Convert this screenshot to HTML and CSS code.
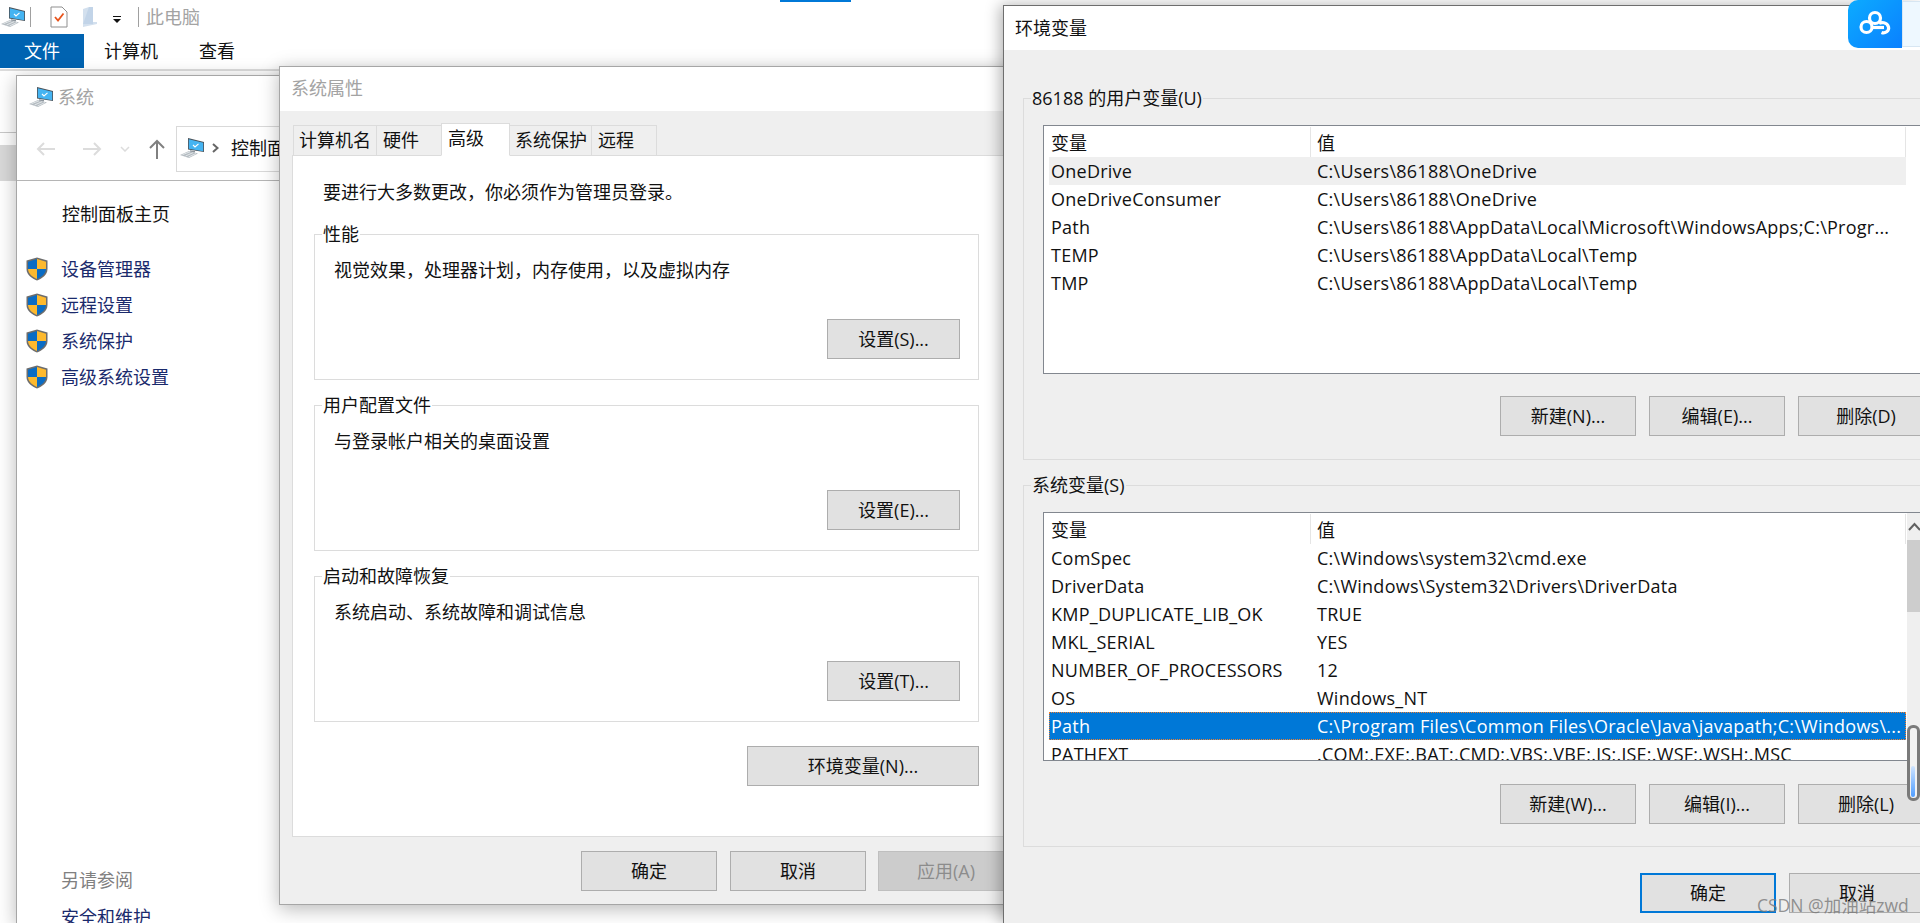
FILE: index.html
```html
<!DOCTYPE html>
<html lang="zh-CN">
<head>
<meta charset="utf-8">
<title>环境变量</title>
<link rel="stylesheet" href="styles.css">
</head>
<body>
<svg class="defs" width="0" height="0">
  <defs>
    <symbol id="pc" viewBox="0 0 24 20">
      <path d="M8 0 24 4V14L8 11.500Z" fill="#4a5157"/>
      <path d="M8.800 1.200 23.200 4.800V13.200L8.800 10.800Z" fill="#45b4f2"/>
      <path d="M13 7 15 9 18.500 5.800" fill="none" stroke="#fff" stroke-width="1.100"/>
      <path d="M10 12.200 15 13 15 14.500 10 13.700Z" fill="#8d969d"/>
      <path d="M0 17 9 13 18 15.500 9 20Z" fill="#b4bbc1"/>
      <path d="M2.500 16.700 10 13.800M5.500 18 13 14.700M8.500 19 16 15.500" stroke="#eef1f3" stroke-width=".8" fill="none"/>
    </symbol>
    <symbol id="shield" viewBox="0 0 22 24">
      <path d="M11 .5 21.500 3.600V12C21.500 18 16 21.500 11 23.500 6 21.500.5 18 .5 12V3.600Z" fill="#6d6d6d"/>
      <path d="M11 2 2 4.700V12H11Z" fill="#0a6cc4"/>
      <path d="M11 2 20 4.700V12H11Z" fill="#fdb92e"/>
      <path d="M2 12C2.400 17 6.500 20 11 22V12Z" fill="#fdb92e"/>
      <path d="M20 12C19.600 17 15.500 20 11 22V12Z" fill="#0a6cc4"/>
    </symbol>
  </defs>
</svg>

<div class="explorer">
  <div class="qat">
    <svg class="ico-pc"><use href="#pc"/></svg>
    <span class="qat-sep"></span>
    <svg class="ico-note" viewBox="0 0 18 22"><path d="M1 1H12L17 6V21H1Z" fill="#fff" stroke="#8f8f8f"/><path d="M5 11 8 14.500 13.500 7.500" fill="none" stroke="#e8541c" stroke-width="1.800"/></svg>
    <svg class="ico-folder" viewBox="0 0 14 20"><path d="M0 2 6 0H10V15H14V17L0 20Z" fill="#d3e0ee"/><path d="M6 0H10V17H0Z" fill="#c2d4e8"/></svg>
    <svg class="ico-drop" viewBox="0 0 8 7"><path d="M0 0H8V1H0ZM0 3H8L4 7Z" fill="#111"/></svg>
    <span class="qat-sep second"></span>
    <span class="qat-title">此电脑</span>
  </div>
  <div class="ribbon">
    <span class="rtab file">文件</span>
    <span class="rtab comp">计算机</span>
    <span class="rtab view">查看</span>
  </div>
  <div class="side-strip"></div>
</div>
<div class="top-blue"></div>

<section class="win sys">
  <header class="sys-title">
    <svg class="ico-pc"><use href="#pc"/></svg>
    <span>系统</span>
  </header>
  <div class="sys-nav">
    <svg class="nav-arrow back" viewBox="0 0 20 16"><path d="M19 8H2M8 2 2 8 8 14" fill="none" stroke="#dcdcdc" stroke-width="2"/></svg>
    <svg class="nav-arrow fwd" viewBox="0 0 20 16"><path d="M1 8H18M12 2 18 8 12 14" fill="none" stroke="#dcdcdc" stroke-width="2"/></svg>
    <svg class="nav-chev" viewBox="0 0 10 6"><path d="M1 1 5 5 9 1" fill="none" stroke="#dcdcdc" stroke-width="1.500"/></svg>
    <svg class="nav-up" viewBox="0 0 16 20"><path d="M8 20V2M1 9 8 2 15 9" fill="none" stroke="#808080" stroke-width="2"/></svg>
    <div class="addr">
      <svg class="ico-pc"><use href="#pc"/></svg>
      <svg class="addr-chev" viewBox="0 0 7 10"><path d="M1 1 5.500 5 1 9" fill="none" stroke="#666" stroke-width="2"/></svg>
      <span>控制面板</span>
    </div>
  </div>
  <div class="sys-side">
    <p class="home">控制面板主页</p>
    <ul class="tasks">
      <li><svg class="ico-shield"><use href="#shield"/></svg>设备管理器</li>
      <li><svg class="ico-shield"><use href="#shield"/></svg>远程设置</li>
      <li><svg class="ico-shield"><use href="#shield"/></svg>系统保护</li>
      <li><svg class="ico-shield"><use href="#shield"/></svg>高级系统设置</li>
    </ul>
    <p class="see">另请参阅</p>
    <p class="see-link">安全和维护</p>
  </div>
</section>

<section class="win props">
  <header class="title props-title">系统属性</header>
  <div class="props-body">
    <div class="tabs">
      <span class="tab t1">计算机名</span>
      <span class="tab t2">硬件</span>
      <span class="tab t3 active">高级</span>
      <span class="tab t4">系统保护</span>
      <span class="tab t5">远程</span>
    </div>
    <div class="panel">
      <p class="intro">要进行大多数更改，你必须作为管理员登录。</p>
      <div class="group pgroup first">
        <div class="legend white">性能</div>
        <p class="desc">视觉效果，处理器计划，内存使用，以及虚拟内存</p>
        <button class="btn pbtn">设置(S)...</button>
      </div>
      <div class="group pgroup">
        <div class="legend white">用户配置文件</div>
        <p class="desc">与登录帐户相关的桌面设置</p>
        <button class="btn pbtn">设置(E)...</button>
      </div>
      <div class="group pgroup third">
        <div class="legend white">启动和故障恢复</div>
        <p class="desc">系统启动、系统故障和调试信息</p>
        <button class="btn pbtn">设置(T)...</button>
      </div>
      <div class="env-row"><button class="btn env-btn">环境变量(N)...</button></div>
    </div>
    <div class="props-foot">
      <button class="btn foot">确定</button>
      <button class="btn foot">取消</button>
      <button class="btn foot disabled">应用(A)</button>
    </div>
  </div>
</section>

<section class="win env">
  <header class="title env-title">环境变量</header>
  <div class="env-body">
    <div class="group egroup">
      <div class="legend">86188 的用户变量(U)</div>
      <div class="list">
        <div class="list-inner">
          <div class="lhead"><span class="hn">变量</span><span class="hv">值</span></div>
          <div class="row hover"><span class="n">OneDrive</span><span>C:\Users\86188\OneDrive</span></div>
          <div class="row"><span class="n">OneDriveConsumer</span><span>C:\Users\86188\OneDrive</span></div>
          <div class="row"><span class="n">Path</span><span>C:\Users\86188\AppData\Local\Microsoft\WindowsApps;C:\Progr...</span></div>
          <div class="row"><span class="n">TEMP</span><span>C:\Users\86188\AppData\Local\Temp</span></div>
          <div class="row"><span class="n">TMP</span><span>C:\Users\86188\AppData\Local\Temp</span></div>
        </div>
      </div>
      <div class="btns">
        <button class="btn ebtn">新建(N)...</button>
        <button class="btn ebtn">编辑(E)...</button>
        <button class="btn ebtn">删除(D)</button>
      </div>
    </div>
    <div class="group egroup second">
      <div class="legend">系统变量(S)</div>
      <div class="list">
        <div class="list-inner">
          <div class="lhead"><span class="hn">变量</span><span class="hv">值</span></div>
          <div class="row"><span class="n">ComSpec</span><span>C:\Windows\system32\cmd.exe</span></div>
          <div class="row"><span class="n">DriverData</span><span>C:\Windows\System32\Drivers\DriverData</span></div>
          <div class="row"><span class="n">KMP_DUPLICATE_LIB_OK</span><span>TRUE</span></div>
          <div class="row"><span class="n">MKL_SERIAL</span><span>YES</span></div>
          <div class="row"><span class="n">NUMBER_OF_PROCESSORS</span><span>12</span></div>
          <div class="row"><span class="n">OS</span><span>Windows_NT</span></div>
          <div class="row selected"><span class="n">Path</span><span>C:\Program Files\Common Files\Oracle\Java\javapath;C:\Windows\...</span></div>
          <div class="row"><span class="n">PATHEXT</span><span>.COM;.EXE;.BAT;.CMD;.VBS;.VBE;.JS;.JSE;.WSF;.WSH;.MSC</span></div>
        </div>
        <div class="scroll">
          <div class="sc-up"><svg viewBox="0 0 13 9"><path d="M1 8 6.500 2 12 8" fill="none" stroke="#606060" stroke-width="2"/></svg></div>
          <div class="sc-thumb"></div>
        </div>
      </div>
      <div class="btns low">
        <button class="btn ebtn">新建(W)...</button>
        <button class="btn ebtn">编辑(I)...</button>
        <button class="btn ebtn">删除(L)</button>
      </div>
    </div>
    <div class="env-foot">
      <button class="btn ebtn primary">确定</button>
      <button class="btn ebtn">取消</button>
    </div>
  </div>
</section>

<div class="pen"><span class="pen-fill"></span></div>

<div class="netdisk">
  <div class="nd-logo">
    <svg viewBox="0 0 54 48"><g fill="none" stroke="#fff" stroke-width="3.200"><circle cx="27" cy="18" r="5.500"/><circle cx="18.500" cy="27" r="5.500"/><path d="M31 23.500C33 22 39 22 40.500 27 41.500 31 37 34 33.500 32.500"/><path d="M24 27.500H36"/></g></svg>
  </div>
  <div class="nd-panel"></div>
</div>

<div class="watermark">CSDN @加油站zwd</div>
</body>
</html>
```

FILE: styles.css
```css
* { box-sizing: border-box; }
html, body {
  margin: 0;
  width: 1920px;
  height: 923px;
  overflow: hidden;
  background: #fff;
}
body {
  font-family: "Open Sans", "Noto Sans CJK SC", sans-serif;
  font-size: 18px;
  line-height: 24px;
  color: #111;
  position: relative;
}
p, ul { margin: 0; padding: 0; list-style: none; }
.defs { display: block; height: 0; }
button { font: inherit; color: inherit; padding: 0; }
svg { flex: none; }

/* explorer behind */
.explorer { width: 1920px; }
.qat { display: flex; align-items: center; height: 34px; padding-left: 1px; }
.qat .ico-pc { width: 24px; height: 20px; }
.qat-sep { width: 1px; height: 20px; background: #a0a0a0; margin-left: 5px; }
.qat-sep.second { margin-left: 17px; }
.ico-note { width: 18px; height: 22px; margin-left: 19px; }
.ico-folder { width: 14px; height: 20px; margin-left: 15px; }
.ico-drop { width: 8px; height: 7px; margin-left: 16px; margin-top: 4px; }
.qat-title { color: #a3a3a3; margin-left: 7px; }
.ribbon { display: flex; height: 37px; border-bottom: 2px solid #dcdcdc; }
.rtab { height: 34px; line-height: 34px; }
.rtab.file { width: 84px; background: #0063b1; color: #fff; padding-left: 24px; }
.rtab.comp { margin-left: 20px; }
.rtab.view { margin-left: 41px; }
.side-strip {
  width: 16px;
  height: 110px;
  border-top: 1px solid #c8c8c8;
  margin-top: 61px;
  background: linear-gradient(#fff 0 12px, #d9d9d9 12px 48px, #fff 48px);
}
.top-blue { position: absolute; left: 780px; top: 0; width: 71px; height: 2px; background: #0078d7; }

/* windows on the desktop */
.win { position: absolute; box-shadow: 0 4px 18px rgba(0, 0, 0, .28); overflow: hidden; }

.sys { left: 16px; top: 75px; width: 1000px; height: 848px; background: #fff; border: 1px solid #a6a6a6; border-bottom: 0; }
.sys-title { display: flex; align-items: center; height: 42px; padding: 0 0 0 12px; color: #a3a3a3; }
.sys-title .ico-pc { width: 24px; height: 20px; margin-right: 5px; }
.sys-nav { display: flex; align-items: center; height: 63px; border-bottom: 1px solid #b5b5b5; padding-left: 19px; }
.nav-arrow { width: 20px; height: 16px; }
.nav-arrow.fwd { margin-left: 26px; }
.nav-chev { width: 10px; height: 6px; margin-left: 18px; }
.nav-up { width: 16px; height: 20px; margin-left: 19px; }
.addr { display: flex; align-items: center; width: 200px; height: 46px; border: 1px solid #d9d9d9; margin-left: 11px; padding: 0 0 2px 3px; white-space: nowrap; overflow: hidden; flex: none; }
.addr .ico-pc { width: 24px; height: 20px; flex: none; }
.addr-chev { width: 7px; height: 10px; margin-left: 8px; flex: none; }
.addr span { margin-left: 12px; }
.sys-side { padding-left: 9px; }
.home { margin: 21px 0 0 36px; }
.tasks { margin-top: 25px; }
.tasks li { display: flex; align-items: center; height: 36px; color: #1a2a6c; }
.ico-shield { width: 22px; height: 24px; margin-right: 13px; flex: none; }
.see { margin: 473px 0 0 35px; color: #808080; }
.see-link { margin: 13px 0 0 35px; color: #1a2a6c; }

/* shared */
.title { display: flex; align-items: center; background: #fff; height: 44px; }
.group { border: 1px solid #dcdcdc; }
.legend { width: fit-content; margin: -14px 0 0 7px; padding: 0 1px; line-height: 26px; background: #efefef; }
.legend.white { background: #fff; }
.btn { display: block; height: 40px; background: #e1e1e1; border: 1px solid #adadad; text-align: center; }

/* system properties */
.props { left: 279px; top: 66px; width: 800px; height: 839px; background: #efefef; border: 1px solid #a6a6a6; }
.props-title { padding: 0 0 2px 11px; color: #a3a3a3; }
.props-body { padding-top: 14px; }
.tabs { display: flex; align-items: flex-end; height: 31px; margin: 0 0 -1px 13px; position: relative; z-index: 1; }
.tab { height: 31px; background: #efefef; border: 1px solid #dcdcdc; border-bottom: 1px solid #dcdcdc; border-left-width: 0; padding-left: 6px; line-height: 28px; white-space: nowrap; }
.t1 { width: 84px; border-left-width: 1px; padding-left: 5px; }
.t2 { width: 65px; }
.t3 { width: 69px; }
.t4 { width: 82px; padding-left: 5px; }
.t5 { width: 65px; }
.tab.active { height: 33px; background: #fff; border-left-width: 1px; border-bottom-color: #fff; line-height: 28px; margin-left: -1px; padding-bottom: 4px; }
.panel { margin-left: 12px; width: 720px; height: 682px; background: #fff; border: 1px solid #dcdcdc; padding-left: 21px; }
.intro { margin: 24px 0 0 9px; }
.pgroup { width: 665px; height: 146px; margin-top: 25px; display: flex; flex-direction: column; }
.pgroup.first { margin-top: 30px; }
.desc { margin: 11px 0 0 19px; }
.pbtn { width: 133px; margin: 37px 18px 0 auto; }
.env-row { display: flex; justify-content: flex-end; width: 665px; margin-top: 24px; }
.env-btn { width: 232px; }
.props-foot { display: flex; gap: 13px; padding: 14px 0 0 301px; }
.foot { width: 136px; }
.foot:nth-child(2) { margin-right: -1px; }
.foot.disabled { background: #ccc; border-color: #bfbfbf; color: #8c8c8c; }

/* environment variables */
.env { left: 1003px; top: 5px; width: 917px; height: 918px; background: #efefef; border: 1px solid #6e6e6e; border-width: 1px 0 0 1px; box-shadow: -3px 0 14px rgba(0, 0, 0, .3); }
.env-title { padding-left: 11px; }
.env-body { padding: 48px 0 0 19px; }
.egroup { width: 930px; height: 362px; }
.egroup.second { margin-top: 25px; }
.list { display: flex; margin: 14px 0 0 19px; width: 910px; height: 249px; background: #fff; border: 1px solid #82878f; overflow: hidden; }
.list-inner { width: 862px; padding-left: 5px; flex: none; margin-right: 1px; }
.lhead { display: flex; height: 31px; line-height: 32px; padding-top: 1px; }
.hn { width: 262px; padding-left: 2px; border-right: 1px solid #e5e5e5; }
.hv { flex: 1; padding-left: 6px; border-right: 1px solid #e5e5e5; }
.row { display: flex; height: 28px; line-height: 28px; white-space: nowrap; letter-spacing: .25px; }
.row .n { width: 268px; padding-left: 2px; flex: none; }
.row.hover { background: #efefef; }
.row.selected { background: #0078d7; color: #fff; outline: 1px dotted #f08030; outline-offset: -1px; }
.scroll { width: 14px; background: #efefef; flex: none; }
.sc-up { height: 27px; display: flex; align-items: center; justify-content: center; }
.sc-up svg { width: 13px; height: 9px; }
.sc-thumb { height: 72px; background: #cdcdcd; }
.btns { display: flex; gap: 13px; margin: 22px 0 0 476px; }
.btns.low { margin-top: 23px; }
.ebtn { width: 136px; flex: none; }
.env-foot { display: flex; gap: 13px; margin: 26px 0 0 617px; }
.ebtn.primary { border: 2px solid #0078d7; }

/* overlays */
.pen { position: absolute; left: 1907px; top: 725px; width: 13px; height: 76px; border: 3px solid #7a7a7a; border-radius: 6px; background: #f2f2f2; padding: 38px 0 0 1px; }
.pen-fill { display: block; width: 4px; height: 31px; border-radius: 2px; background: linear-gradient(#cfe4ff, #4f9dff); }
.netdisk { position: absolute; left: 1848px; top: 0; width: 72px; height: 48px; display: flex; }
.nd-logo { width: 54px; height: 48px; border-radius: 10px 0 0 10px; background: linear-gradient(135deg, #0cabff, #0a80ff); flex: none; }
.nd-logo svg { display: block; width: 54px; height: 48px; }
.nd-panel { width: 18px; height: 46px; margin-top: 1px; background: #eef8ff; border: 1px solid #d7e6f2; border-right: 0; }
.watermark { position: absolute; left: 1757px; top: 893px; color: rgba(120, 120, 120, .8); font-size: 17.5px; white-space: nowrap; }
```
